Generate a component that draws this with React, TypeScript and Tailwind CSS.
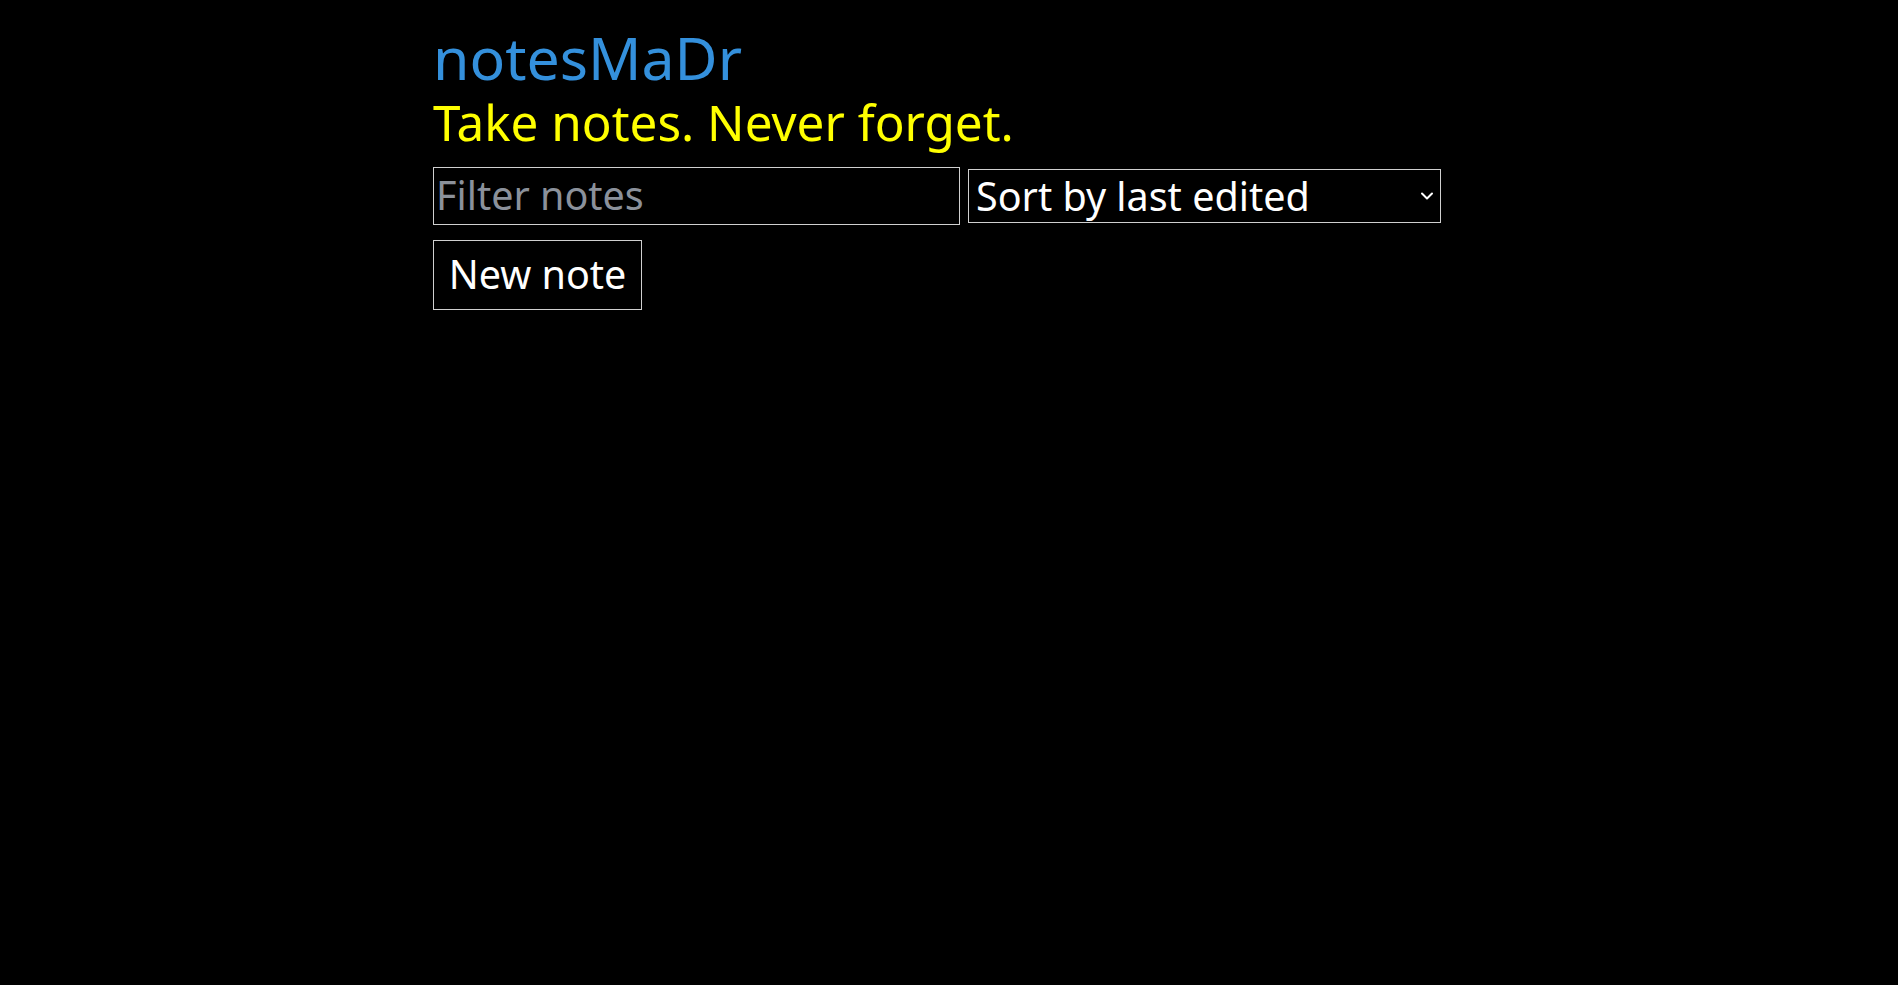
import { ChevronDown } from "lucide-react";

const fontStack = { fontFamily: '"Noto Sans", sans-serif' };

export default function App() {
  return (
    <div className="min-h-screen bg-black text-white" style={fontStack}>
      <div className="mx-auto w-[1032px] pt-[23px]">
        <h1 className="text-[59px] leading-[68px] text-[#3490dc]">notesMaDr</h1>
        <p className="text-[49.4px] leading-[62px] text-[#ffff00]">Take notes. Never forget.</p>
        <div className="mt-[14px] flex items-center gap-2">
          <input
            placeholder="Filter notes"
            className="h-[58px] w-[527px] border border-[#d0d0d0] bg-black px-0.5 text-[39.5px] text-white placeholder:text-[#8b919b] outline-none"
          />
          <div className="relative h-[54px] w-[473px] border border-[#d0d0d0]">
            <select className="h-full w-full appearance-none bg-black py-0 pl-[7px] text-[39.5px] leading-[52px] text-white outline-none">
              <option>Sort by last edited</option>
            </select>
            <ChevronDown
              className="pointer-events-none absolute right-[3px] top-1/2 h-5 w-5 -translate-y-1/2"
              strokeWidth={2.4}
            />
          </div>
        </div>
        <button className="mt-[15px] h-[70px] w-[209px] border border-[#d0d0d0] bg-black text-[39.5px] text-white">
          New note
        </button>
      </div>
    </div>
  );
}
